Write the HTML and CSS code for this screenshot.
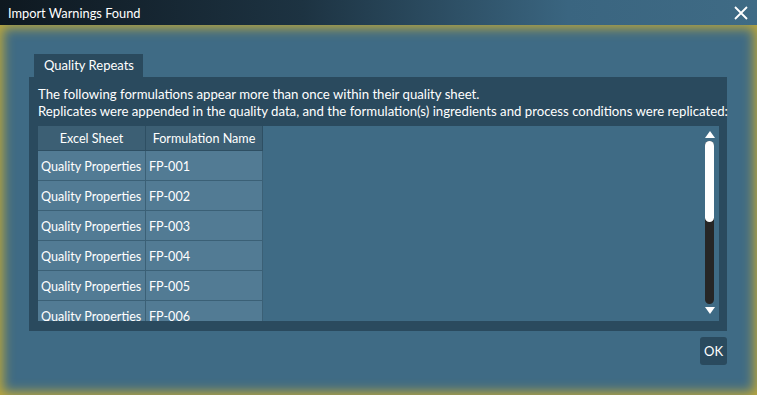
FILE: index.html
```html
<!DOCTYPE html>
<html lang="en">
<head>
<meta charset="UTF-8">
<title>Import Warnings Found</title>
<link rel="stylesheet" href="styles.css">
</head>
<body>
<div class="window">
  <div class="titlebar">
    <span class="title">Import Warnings Found</span>
    <svg class="close" width="14" height="14" viewBox="0 0 14 14">
      <path d="M1 1 L13 13 M13 1 L1 13" stroke="#fff" stroke-width="1.8" fill="none"/>
    </svg>
  </div>
  <div class="content">
    <div class="tabs">
      <div class="tab">Quality Repeats</div>
    </div>
    <div class="panel">
      <p class="msg">The following formulations appear more than once within their quality sheet.<br>Replicates were appended in the quality data, and the formulation(s) ingredients and process conditions were replicated:</p>
      <div class="grid-area">
        <table class="grid">
          <thead>
            <tr><th class="col-sheet">Excel Sheet</th><th class="col-name">Formulation Name</th></tr>
          </thead>
          <tbody>
            <tr><td>Quality Properties</td><td>FP-001</td></tr>
            <tr><td>Quality Properties</td><td>FP-002</td></tr>
            <tr><td>Quality Properties</td><td>FP-003</td></tr>
            <tr><td>Quality Properties</td><td>FP-004</td></tr>
            <tr><td>Quality Properties</td><td>FP-005</td></tr>
            <tr><td>Quality Properties</td><td>FP-006</td></tr>
          </tbody>
        </table>
        <div class="scrollbar">
          <span class="arrow up"></span>
          <div class="track"><div class="thumb"></div></div>
          <span class="arrow down"></span>
        </div>
      </div>
    </div>
    <div class="actions">
      <button class="ok">OK</button>
    </div>
  </div>
</div>
</body>
</html>
```

FILE: styles.css
```css
body {
  margin: 0;
  font-family: Lato, "Open Sans", sans-serif;
  background: #3f6b85;
}
.window {
  width: 757px;
  height: 395px;
  overflow: hidden;
}
.titlebar {
  height: 25px;
  display: flex;
  align-items: center;
  justify-content: space-between;
  padding: 0 9px 0 8px;
  background: linear-gradient(to right, #0e1820 0%, #1d3342 40%, #3a6580 75%, #3f6b85 100%);
  color: #fff;
  font-size: 12.8px;
}
.close {
  display: block;
}
.content {
  height: 370px;
  box-sizing: border-box;
  padding: 29px 30px 0 29px;
  background: #3f6b85;
  box-shadow: inset 0 0 12px 3px #bfa93a;
}
.tabs {
  display: flex;
  padding-left: 5px;
}
.tab {
  box-sizing: border-box;
  width: 109px;
  height: 23px;
  line-height: 23px;
  padding-left: 10px;
  background: #2a4a5e;
  color: #fff;
  font-size: 13px;
  white-space: nowrap;
}
.panel {
  height: 254px;
  box-sizing: border-box;
  background: #2a4a5e;
  padding: 9px 8px 10px 9px;
  display: flex;
  flex-direction: column;
}
.msg {
  margin: 0 0 6px;
  color: #fff;
  font-size: 13.2px;
  line-height: 17px;
  white-space: nowrap;
}
.grid-area {
  flex: 1;
  background: #3f6b85;
  display: flex;
  overflow: hidden;
}
.grid {
  border-collapse: collapse;
  align-self: flex-start;
  color: #fff;
  font-size: 12.6px;
}
.grid th {
  height: 24px;
  padding: 0;
  background: #3c5f74;
  font-weight: normal;
  border-right: 1px solid #2e4f63;
  border-bottom: 1px solid #2e4f63;
}
.col-sheet { width: 107px; }
.col-name { width: 116px; }
.grid td {
  box-sizing: border-box;
  height: 30px;
  padding: 1px 0 0 3px;
  background: #527b94;
  border-right: 1px solid #3b6076;
  border-bottom: 1px solid #3b6076;
  white-space: nowrap;
}
.scrollbar {
  margin-left: auto;
  margin-right: 5px;
  width: 9px;
  padding-top: 5px;
  display: flex;
  flex-direction: column;
  align-items: center;
}
.arrow {
  width: 0;
  height: 0;
  border-left: 5px solid transparent;
  border-right: 5px solid transparent;
}
.arrow.up {
  border-bottom: 7px solid #fff;
  margin-bottom: 3px;
}
.arrow.down {
  border-top: 7px solid #fff;
  margin-top: 3px;
}
.track {
  width: 9px;
  height: 163px;
  border-radius: 5px;
  background: #262626;
}
.thumb {
  height: 81px;
  border-radius: 5px;
  background: #fff;
}
.actions {
  display: flex;
  justify-content: flex-end;
  padding-top: 6px;
}
.ok {
  width: 27px;
  height: 28px;
  padding: 0;
  border: none;
  border-radius: 3px;
  background: #2a4a5e;
  color: #fff;
  font-family: Lato, "Open Sans", sans-serif;
  font-size: 13px;
}
```
